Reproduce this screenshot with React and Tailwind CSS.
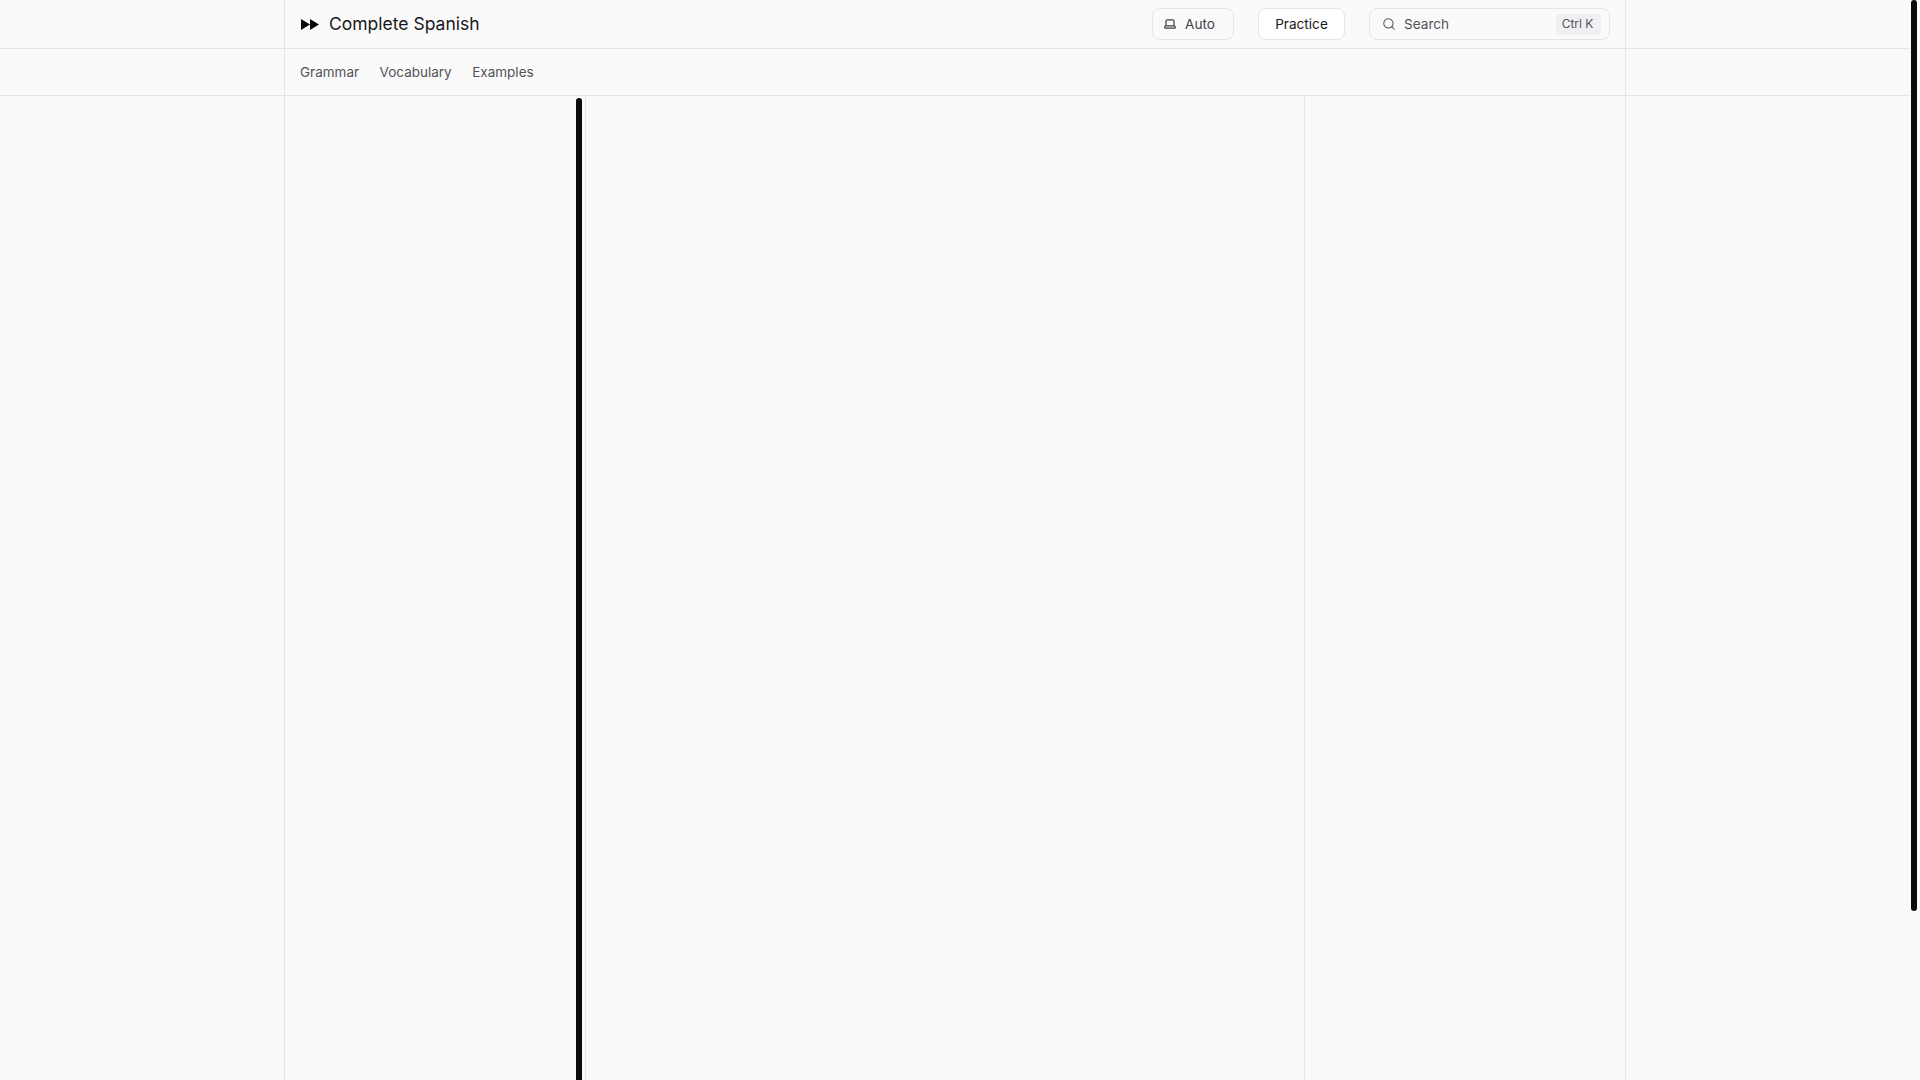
import React from 'react';
import { Search } from 'lucide-react';

const navLinks = ['Grammar', 'Vocabulary', 'Examples'];

const App = () => {
  return (
    <div className="flex h-[1080px] w-[1920px] overflow-hidden bg-[#fafafa] font-['Inter',sans-serif] text-[#18181b]">
      <div className="flex h-full w-[1910px] flex-col">
        {/* Top bar */}
        <div className="h-[49px] shrink-0 border-b border-[#e5e5e7]">
          <div className="mx-auto flex h-full w-[1342px] items-center border-x border-[#e5e5e7] pl-[16px] pr-[15px]">
            <svg className="h-[11px] w-[18px] shrink-0" viewBox="0 0 18 11" fill="#09090b">
              <path d="M0 0 L9 5.5 L0 11 Z M9 0 L18 5.5 L9 11 Z" />
            </svg>
            <span className="ml-[10px] text-[17.5px] leading-6 text-[#18181b]">Complete Spanish</span>
            <div className="ml-auto flex items-center gap-6">
              <button className="flex h-8 w-[82px] items-center rounded-lg border border-[#e5e5e7] pl-[11px] text-[13.6px] text-[#3f3f46]">
                <svg className="h-[10px] w-[12px] shrink-0" viewBox="0 0 12 10" fill="none" stroke="#3f3f46" strokeWidth="1.2" strokeLinejoin="round">
                  <path d="M2 6.8V2.1A1.3 1.3 0 0 1 3.3 0.8h5.4A1.3 1.3 0 0 1 10 2.1v4.7" />
                  <path d="M1.4 6.8h9.2l0.7 1.3a0.7 0.7 0 0 1-0.6 1.1H1.3a0.7 0.7 0 0 1-0.6-1.1z" />
                </svg>
                <span className="ml-[9px] pt-px">Auto</span>
              </button>
              <button className="h-8 w-[87px] rounded-lg border border-[#e5e5e7] bg-white pt-px text-[13.6px] text-[#18181b]">Practice</button>
              <div className="flex h-8 w-[241px] items-center rounded-lg border border-[#e5e5e7] pl-[12px] pr-[8px] text-[13.6px] text-[#52525b]">
                <Search className="h-[14px] w-[14px]" strokeWidth={1.75} />
                <span className="ml-[8px] pt-px">Search</span>
                <span className="ml-auto flex h-[21px] w-[45px] items-center justify-center rounded bg-[#f0f0f3] pr-[2px] text-[12px] text-[#52525b]">Ctrl K</span>
              </div>
            </div>
          </div>
        </div>

        {/* Section nav */}
        <div className="h-[47px] shrink-0 border-b border-[#e5e5e7]">
          <div className="mx-auto flex h-full w-[1342px] items-center gap-[20.5px] border-x border-[#e5e5e7] px-[15px] text-[13.5px] text-[#52525b]">
            {navLinks.map((link) => (
              <a key={link}>{link}</a>
            ))}
          </div>
        </div>

        {/* Columns */}
        <div className="mx-auto flex min-h-0 w-[1342px] flex-1 border-x border-[#e5e5e7]">
          <aside className="flex w-[301px] shrink-0 justify-end border-r border-[#e5e5e7] pr-[3px] pt-[2px]">
            <div className="h-full w-[6px] rounded-t-full bg-[#0a0a0a]" />
          </aside>
          <main className="flex-1" />
          <aside className="w-[321px] shrink-0 border-l border-[#e5e5e7]" />
        </div>
      </div>

      {/* Page scrollbar */}
      <div className="w-[10px] shrink-0 pl-px">
        <div className="h-[911px] w-[6px] rounded-full bg-[#0a0a0a]" />
      </div>
    </div>
  );
};

export default App;
